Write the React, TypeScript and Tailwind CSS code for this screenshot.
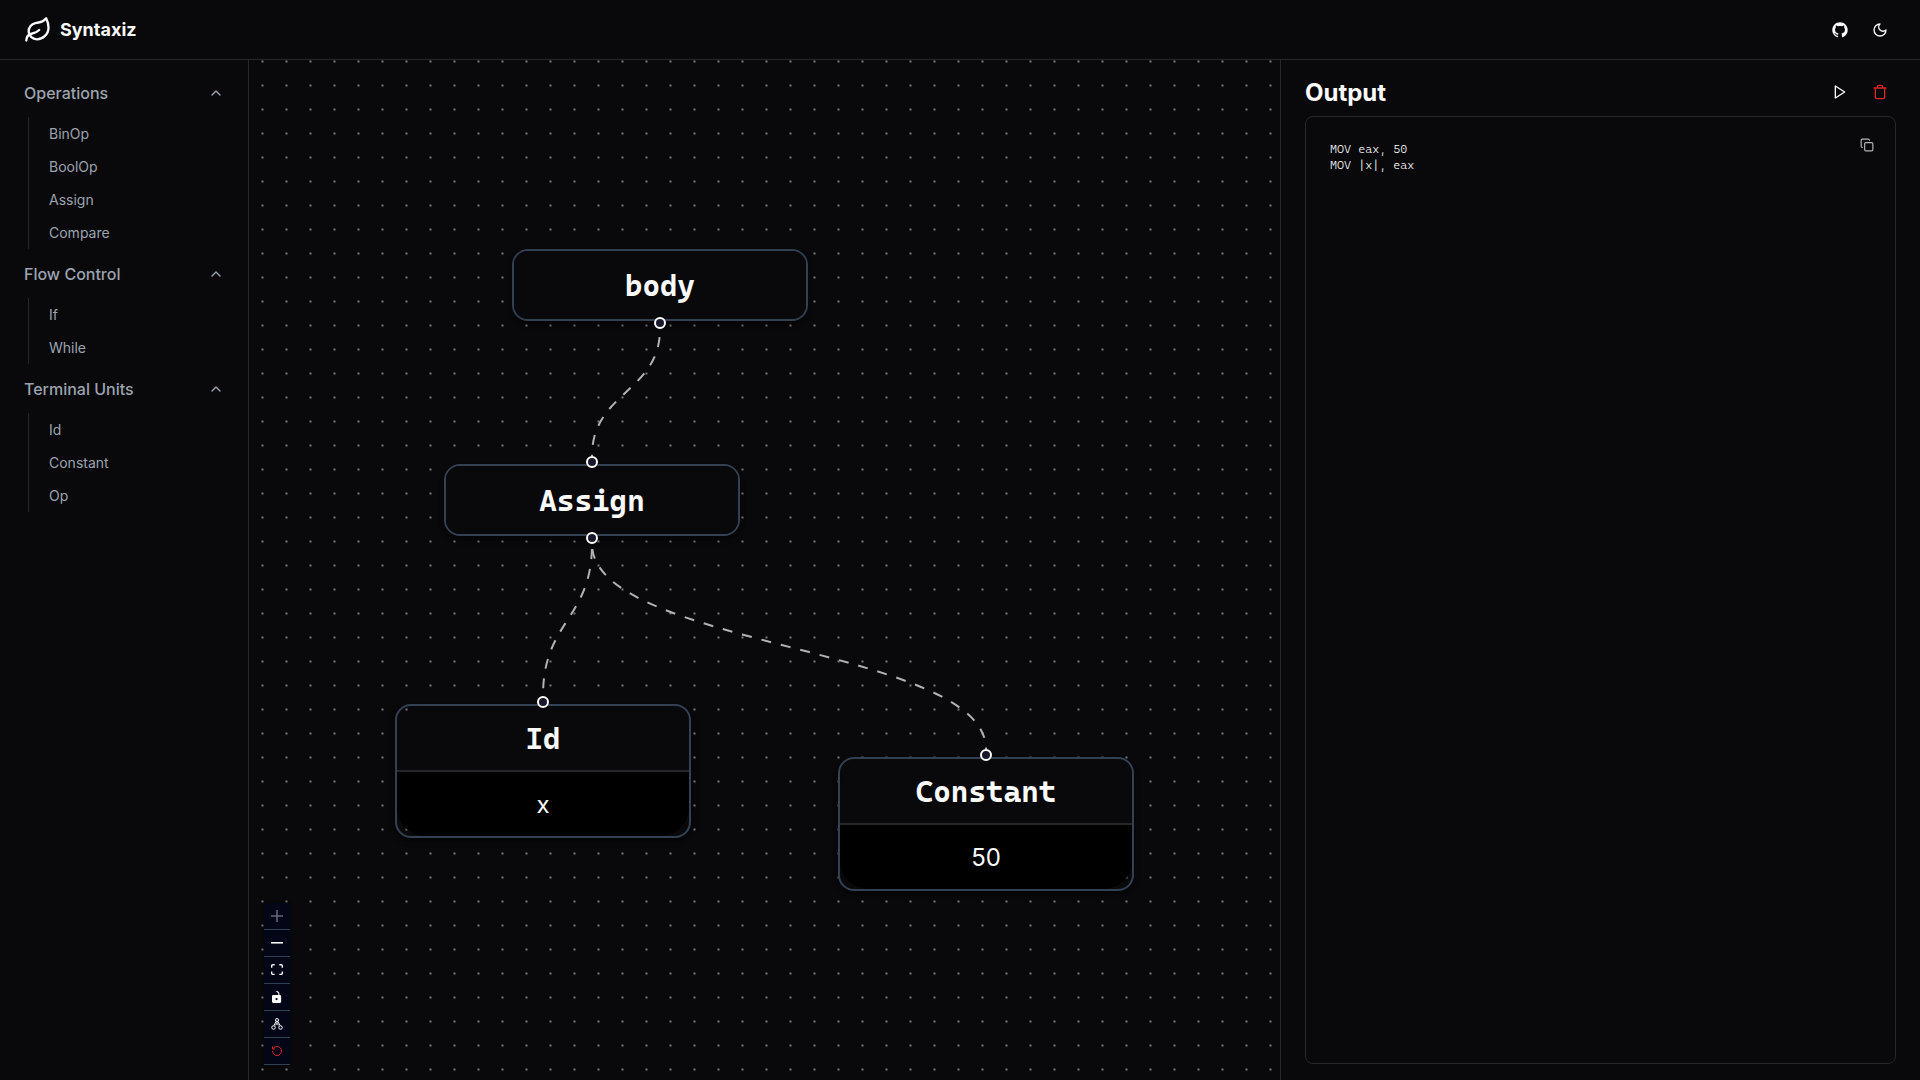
import { useId, useState } from "react";
import type { ReactNode } from "react";
import { ChevronUp, Copy, Leaf } from "lucide-react";
import { RxGithubLogo } from "react-icons/rx";

const groups = [
  { title: "Operations", items: ["BinOp", "BoolOp", "Assign", "Compare"] },
  { title: "Flow Control", items: ["If", "While"] },
  { title: "Terminal Units", items: ["Id", "Constant", "Op"] },
];

const assembly = "MOV eax, 50\nMOV |x|, eax";

function StrokeIcon({ d, round = true, className = "size-4" }: { d: string; round?: boolean; className?: string }) {
  return (
    <svg
      viewBox="0 0 24 24"
      fill="none"
      stroke="currentColor"
      strokeWidth="2"
      strokeLinecap={round ? "round" : "butt"}
      strokeLinejoin={round ? "round" : "miter"}
      className={className}
    >
      <path d={d} />
    </svg>
  );
}

function IconButton({ label, children }: { label: string; children: ReactNode }) {
  return (
    <button type="button" aria-label={label} className="flex size-8 items-center justify-center rounded-md">
      {children}
    </button>
  );
}

function Header() {
  return (
    <header className="flex h-15 shrink-0 items-center justify-between border-b border-[#27272a] px-6">
      <a href="#" className="flex items-center gap-2 text-lg font-bold">
        <Leaf size={28} />
        Syntaxiz
      </a>
      <div className="flex gap-2">
        <IconButton label="GitHub">
          <RxGithubLogo className="size-4" />
        </IconButton>
        <IconButton label="Toggle theme">
          <StrokeIcon d="M12 3a6 6 0 0 0 9 9 9 9 0 1 1-9-9Z" />
        </IconButton>
      </div>
    </header>
  );
}

function SidebarGroup({ title, items }: { title: string; items: string[] }) {
  const [open, setOpen] = useState(true);
  return (
    <section>
      <button
        type="button"
        aria-expanded={open}
        onClick={() => setOpen(!open)}
        className="flex h-[49px] w-full items-center justify-between font-medium"
      >
        {title}
        <ChevronUp className="size-4" />
      </button>
      {open && (
        <ul className="ml-1 border-l border-[#27272a]">
          {items.map((item) => (
            <li key={item}>
              <button type="button" className="flex h-[33px] w-full items-center pl-5 text-sm">
                {item}
              </button>
            </li>
          ))}
        </ul>
      )}
    </section>
  );
}

function Handle({ className }: { className: string }) {
  return (
    <span
      className={`absolute left-1/2 size-3 -translate-x-1/2 rounded-full border-2 border-white bg-[#1a192b] ${className}`}
    />
  );
}

function Node({
  title,
  value,
  place,
  top,
  bottom,
}: {
  title: string;
  value?: string;
  place: string;
  top?: boolean;
  bottom?: boolean;
}) {
  const leaf = value !== undefined;
  const id = useId();
  return (
    <div className={`absolute w-[296px] rounded-2xl border-2 border-[#334155] shadow-md shadow-black/40 ${place}`}>
      {top && <Handle className="-top-2.5" />}
      <label
        htmlFor={leaf ? id : undefined}
        className={
          "flex items-center justify-center bg-[#09090b] font-['Cascadia_Code','Source_Code_Pro','DejaVu_Sans_Mono',monospace] text-[30px] font-bold " +
          (leaf ? "h-16 rounded-t-[28px]" : "h-[68px] rounded-[14px]")
        }
      >
        {title}
      </label>
      {leaf && (
        <div className="border-t-2 border-[#27272a]">
          <input
            id={id}
            type="text"
            defaultValue={value}
            className="block h-16 w-full rounded-b-[28px] bg-black text-center text-2xl outline-none"
          />
        </div>
      )}
      {bottom && <Handle className="-bottom-2.5" />}
    </div>
  );
}

function ControlButton({ label, className = "", children }: { label: string; className?: string; children: ReactNode }) {
  return (
    <button
      type="button"
      aria-label={label}
      className={`flex h-[27px] w-[26px] items-center justify-center border-b border-[#334155] bg-[#020617] ${className}`}
    >
      {children}
    </button>
  );
}

function Controls() {
  return (
    <div className="absolute bottom-[15px] left-[15px] flex flex-col shadow-[0_0_2px_1px_rgba(0,0,0,0.3)]">
      <ControlButton label="Zoom in">
        <svg viewBox="0 0 32 32" className="size-3 fill-current opacity-40">
          <path d="M32 18.133H18.133V32h-4.266V18.133H0v-4.266h13.867V0h4.266v13.867H32z" />
        </svg>
      </ControlButton>
      <ControlButton label="Zoom out">
        <svg viewBox="0 0 32 5" className="w-3 fill-current">
          <path d="M0 0h32v4.2H0z" />
        </svg>
      </ControlButton>
      <ControlButton label="Fit view">
        <svg viewBox="0 0 32 30" className="w-3 fill-current">
          <path d="M3.692 4.63c0-.53.4-.938.939-.938h5.215V0H4.708C2.13 0 0 2.054 0 4.63v5.216h3.692V4.631zM27.354 0h-5.2v3.692h5.17c.53 0 .984.4.984.939v5.215H32V4.631A4.624 4.624 0 0027.354 0zm.954 24.83c0 .532-.4.94-.939.94h-5.215v3.768h5.215c2.577 0 4.631-2.13 4.631-4.707v-5.139h-3.692v5.139zm-23.677.94c-.531 0-.939-.4-.939-.94v-5.138H0v5.139c0 2.577 2.13 4.707 4.708 4.707h5.138V25.77H4.631z" />
        </svg>
      </ControlButton>
      <ControlButton label="Toggle interactivity">
        <svg viewBox="0 0 25 32" className="h-3 fill-current">
          <path d="M21.333 10.667H19.81V7.619C19.81 3.429 16.38 0 12.19 0c-4.114 1.828-1.37 2.133.305 2.438 1.676.305 4.42 2.59 4.42 5.181v3.048H3.047A3.056 3.056 0 000 13.714v15.238A3.056 3.056 0 003.048 32h18.285a3.056 3.056 0 003.048-3.048V13.714a3.056 3.056 0 00-3.048-3.047zM12.19 24.533a3.056 3.056 0 01-3.047-3.047 3.056 3.056 0 013.047-3.048 3.056 3.056 0 013.048 3.048 3.056 3.056 0 01-3.048 3.047z" />
        </svg>
      </ControlButton>
      <ControlButton label="Auto layout">
        <svg viewBox="0 0 24 24" fill="none" stroke="currentColor" strokeWidth="2" className="size-3">
          <circle cx="12" cy="4" r="3" />
          <circle cx="5" cy="19" r="3.500" />
          <circle cx="19" cy="19" r="3.500" />
          <path d="M12 7v5M10.500 6.500 5.500 15.500M13.500 6.500l5 9M8.500 14 12 11.500l3.500 2.500" />
        </svg>
      </ControlButton>
      <ControlButton label="Reset" className="text-[#dc2626]">
        <StrokeIcon className="size-3" round={false} d="M3 12a9 9 0 1 0 9-9 9.750 9.750 0 0 0-6.740 2.740L3 8M3 3v5h5" />
      </ControlButton>
    </div>
  );
}

function Canvas() {
  return (
    <main className="relative flex-1 overflow-hidden">
      <svg className="absolute inset-0 size-full">
        <defs>
          <pattern id="dots" x="12.500" y="0.500" width="24" height="24" patternUnits="userSpaceOnUse">
            <circle cx="1" cy="1" r="1" fill="#9c9ca4" />
          </pattern>
        </defs>
        <rect width="100%" height="100%" fill="url(#dots)" />
        <g fill="none" stroke="#b1b1b7" strokeWidth="2" strokeDasharray="10 10">
          <path d="M411 269C411 332 343 332 343 396" strokeDashoffset="12" />
          <path d="M343 484C343 560 294 560 294 636" strokeDashoffset="15" />
          <path d="M343 484C343 587 737 587 737 689" strokeDashoffset="15" />
        </g>
      </svg>
      <Node title="body" place="left-[263px] top-[189px]" bottom />
      <Node title="Assign" place="left-[195px] top-[404px]" top bottom />
      <Node title="Id" value="x" place="left-[146px] top-[644px]" top />
      <Node title="Constant" value="50" place="left-[589px] top-[697px]" top />
      <Controls />
    </main>
  );
}

function Output() {
  return (
    <section className="flex w-1/3 shrink-0 flex-col gap-2 border-l border-[#27272a] px-6 py-4">
      <div className="flex h-8 items-center justify-between">
        <h1 className="pt-0.5 text-2xl leading-8 font-bold">Output</h1>
        <div className="flex gap-2">
          <IconButton label="Run">
            <StrokeIcon d="M5 3l14 9-14 9V3z" />
          </IconButton>
          <IconButton label="Clear">
            <StrokeIcon
              className="size-4 text-[#dc2626]"
              d="M3 6h18M19 6v14c0 1-1 2-2 2H7c-1 0-2-1-2-2V6M8 6V4c0-1 1-2 2-2h4c1 0 2 1 2 2v2"
            />
          </IconButton>
        </div>
      </div>
      <div className="flex flex-1 items-start justify-between rounded-lg border border-[#27272a] py-6 pr-[21px] pl-6">
        <pre className="font-['Cascadia_Code','Noto_Sans_Mono','DejaVu_Sans_Mono',monospace] text-xs leading-4 font-[350] text-white">
          {assembly}
        </pre>
        <button type="button" aria-label="Copy" className="-mt-[3px] text-[#b4b4b4]">
          <Copy className="size-3.5" />
        </button>
      </div>
    </section>
  );
}

export default function App() {
  return (
    <div className="flex h-screen flex-col bg-[#09090b] font-['Inter',sans-serif] text-neutral-50">
      <Header />
      <div className="flex min-h-0 flex-1">
        <nav className="w-[249px] shrink-0 border-r border-[#27272a] px-6 py-2 text-[#9ca3af]">
          {groups.map((group) => (
            <SidebarGroup key={group.title} {...group} />
          ))}
        </nav>
        <Canvas />
        <Output />
      </div>
    </div>
  );
}
